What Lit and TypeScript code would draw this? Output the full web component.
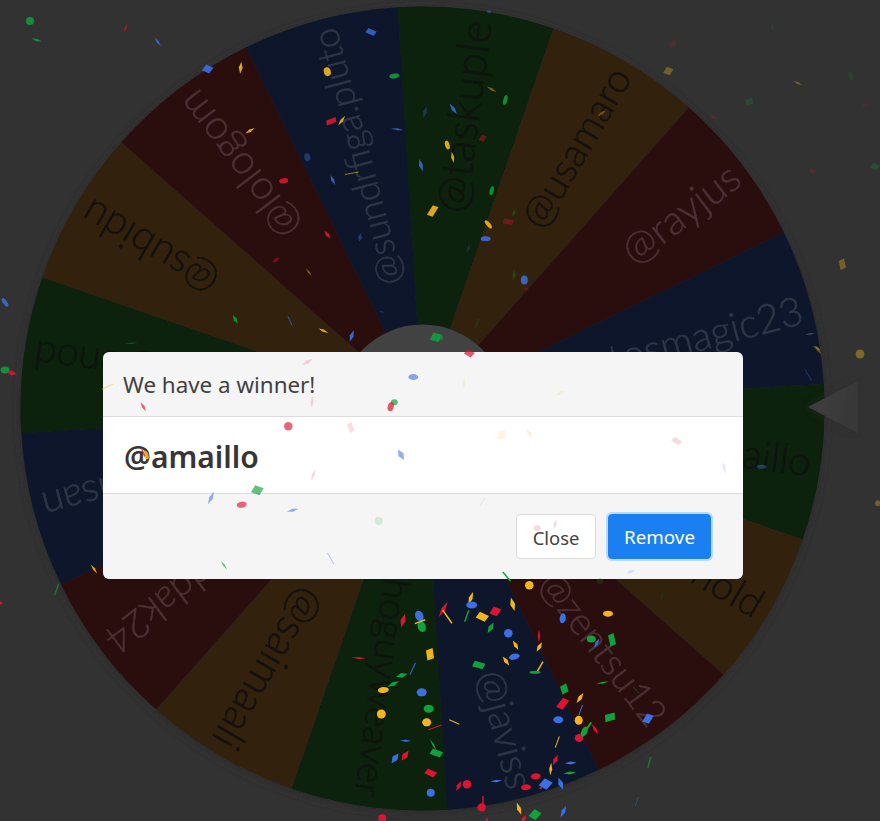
import { LitElement, html, css, svg } from "lit";
import { customElement } from "lit/decorators.js";

const CX = 422.5, CY = 408.5, R = 402, HUB = 84, STEP = 22.5, START = -3.5;
const SEG: Record<string, { fill: string; text: string }> = {
  g: { fill: "#08200e", text: "#0c170e" },
  y: { fill: "#30220f", text: "#15110a" },
  r: { fill: "#2c0b0f", text: "#4a3034" },
  b: { fill: "#0e182b", text: "#2e3646" },
};
const NAMES: [string, string, number][] = [
  ["@amaillo", "g", 40], ["@arnold", "y", 40], ["@zentsu12", "r", 38], ["@javiss", "b", 39],
  ["@hhoguyweaver", "g", 38], ["@saimaali", "y", 43], ["@addak24", "r", 39], ["@hasan", "b", 40],
  ["@lenod", "g", 40], ["@subidu", "y", 41], ["@lologom", "r", 41], ["@sundrfiga.pluto", "b", 36.5],
  ["@taskuple", "g", 44], ["@usamaro", "y", 40], ["@rayjus", "r", 41], ["@atosmagic23", "b", 40],
];
const RD = "#dc1430", GR = "#10a03c", BL = "#3b6fe2", YE = "#f2b51c";

// kind, x, y, w, h, rotation, colour, opacity
type C = [string, number, number, number, number, number, string, number?];
const CONFETTI: C[] = [
  // bottom cluster
  ["d",470.7,598.3,4,14,20,YE],["e",471.7,605,11,7,0,BL],["d",443.3,609.3,4,18,30,RD],["l",447.3,616.7,1.5,16,-35,YE],
  ["e",419.3,616,8,11,-25,BL],["e",421.7,626.7,8,11,-20,GR],["l",420,621.7,1.5,11,70,YE],["d",403,620.7,5,14,15,RD],
  ["r",482.3,616.7,10,7,25,YE],["r",495.3,611.3,8,8,20,RD],["d",512.7,604.3,5,14,-15,YE],["e",529.3,585.3,8.5,8.5,0,YE],
  ["l",506.7,576.7,1.5,12,-40,GR],["d",490.7,627.7,5,12,30,GR],["l",466.7,616,1.5,12,20,GR],["e",508.3,633.3,8.5,8.5,0,BL],
  ["d",515.7,645.3,4,11,-30,YE],["e",514.3,656.7,11,6,-15,BL],["d",506,661,4,11,-35,YE],["d",539,636,2.5,13,0,RD],
  ["d",539.3,647,4,11,30,YE],["l",540,666.7,1.5,12,30,YE],["e",535,672.3,11,3,0,GR],["r",478.7,665,11,6,15,GR],
  ["r",430,654.3,7,10,-20,YE],["d",359,658,14,2,5,RD],["d",401.7,675.3,12,5,-15,GR],["l",412.7,668.7,1,13,25,BL],
  ["d",393.3,684,13,4,-25,GR],["e",383.3,690,11,6,-5,YE],["e",421.7,692.3,10,8,0,BL],["e",428.7,708.7,10,8,0,GR],
  ["e",381.3,714,9,9,0,YE],["e",426.7,722.3,9,8,0,YE],["l",454.3,722,1,11,-65,YE],["l",435,727.3,1,14,70,RD],
  ["d",405.7,740.7,12,2,3,BL],["d",433.3,745,2,13,-30,GR],["r",436.3,753,11,6,20,GR],["d",395,758.3,6,12,35,BL],
  ["d",405,755.7,6,12,35,RD],["r",430.7,773,10,6,25,RD],["e",430.7,792.7,8,8,0,BL],["d",458.7,786,4,11,25,RD],
  ["e",467,784.3,8.5,8.5,0,RD],["d",496.3,781,12,2.5,-5,BL],["e",481.7,807.3,8.5,8,0,RD],["l",483,800,1.5,8,0,RD],
  ["e",382.3,818.3,8,8,0,RD],["d",519,808.7,4,13,-20,YE],["r",535,814.7,8,9,30,GR],["d",523.7,819,4,10,30,RD],
  ["d",563.3,811.7,4,13,25,BL],["d",486.7,820,3,5,20,RD],["e",535.7,776.3,10,6,-8,RD],["e",526,787.3,10,6,-5,RD],
  ["r",545.7,784,9,9,30,BL],["d",560.7,783.7,5,13,-20,BL],["d",541,788,5,2,-20,RD],["d",550.7,769,3,13,5,YE],
  ["d",555.3,760,4,12,25,RD],["d",570.7,763,12,3,-3,BL],["d",569.7,773,13,3,-5,GR],["l",557.3,742,1,12,20,YE],
  ["e",579,738,8.5,8,0,RD],["e",584.3,731.7,6,11,25,GR],["l",589,725.7,2,8,35,GR],["d",595,729.3,3,12,-30,RD],
  ["e",578.7,720.3,8,9,0,YE],["e",558.3,719.7,10,7,0,BL],["r",562.7,703.7,7,11,25,RD],["d",580,698,4,12,35,YE],
  ["l",580.7,710,1,11,20,BL],["r",564.3,689,7,8,-30,GR],["r",610,717.3,10,7,-15,GR],["r",648,718.7,7,9,20,BL],
  ["d",602.7,682.7,13,2,-10,GR],["l",636,690,1,9,-40,GR,.35],["e",562.7,618.3,6,10,10,BL],["e",608,613.7,10,6,0,YE],
  ["e",591.3,639,9,7,0,GR],["r",612,639.7,6,11,-25,GR],["d",596.7,643.3,3,11,30,BL],["e",600,581,6,6,0,GR,.2],
  ["l",649.3,762.3,1.5,11,15,GR,.6],["l",636.7,801.7,1,10,20,BL,.4],["l",662,596,1,7,15,GR,.2],
  // upper left
  ["e",30,21,8,8,0,GR,.85],["d",36.7,40,11,2.5,15,GR,.85],["d",125.3,28.3,2,10,25,RD,.7],["d",157.7,41.7,2.5,11,-35,BL,.8],
  ["r",207.7,69,8,7,25,BL,.9],["d",240.7,67.7,4,12,5,YE,.9],["d",250,130.7,11,3,-30,YE,.9],["e",283.7,180.7,9,5,-10,RD,.9],
  ["e",327.3,71.7,7,9,-15,YE,.9],["r",371,32,9,5,25,BL,.8],["e",394.3,76,10,5,-10,GR,.85],["r",331.3,121.3,10,5,-20,RD,.9],
  ["d",341.7,120.7,3,12,35,YE,.9],["d",397.3,129.3,13,2,8,BL,.8],["d",425,112,4,12,15,BL,.3],["d",421,165.3,4,13,-15,BL,.85],
  ["r",432.7,211,6,11,20,YE,.9],["e",307.3,157.3,6,8,-10,BL,.4],["d",332.7,180,3,11,-25,BL,.8],["l",351.7,173.3,1,14,80,YE,.6],
  ["d",327.3,234.7,3.5,10,-35,RD,.9],["d",360,237.3,4,9,10,BL,.4],["d",276,260,4,9,55,RD,.4],["d",308.7,272,2,10,-35,YE,.45],
  ["d",235.3,319.3,3.5,10,-30,GR,.85],["l",290,321,1,10,-25,BL,.6],["d",323.3,330.7,11,2.5,25,YE,.9],["d",351.7,336,4,12,20,BL,.9],
  ["r",436,337.3,9,8,15,GR,.9],["e",5,302.3,4,10,-35,BL,.85],["d",131.7,343.3,13,1.5,-5,GR,.4],["d",381.7,311.7,6,2,15,BL,.25],
  // upper right
  ["d",489,11.7,6,4,20,BL,.4],["d",491.7,89.3,11,2.5,30,YE,.45],["e",505.3,100,4,10,15,GR,.85],["d",453.3,109,3.5,13,-35,BL,.85],
  ["r",482.7,138.3,5,6,20,RD,.4],["e",447.3,145,4.5,9,-15,YE,.9],["d",452.7,157.3,3,12,-10,YE,.9],["e",491.7,190.7,4,9,15,GR,.85],
  ["e",488.3,224.3,4,10,-40,YE,.9],["e",485.7,238.7,10,5,0,BL,.85],["r",508.3,221.7,10,5,10,RD,.35],["d",514,212.7,3,9,15,GR,.3],
  ["e",524.3,280,7,9,0,BL,.85],["d",514,275,3,10,5,GR,.3],["d",468.3,248.3,2,9,20,BL,.3],["d",601.7,113.3,10,3,-35,YE,.35],
  ["r",668.3,71,7,7,20,YE,.35],["r",672.3,44.3,7,5,-30,RD,.18],["d",772.3,26.7,3,10,-15,GR,.12],["d",797.7,83,10,2,25,YE,.35],
  ["r",850.7,76,5,8,-25,GR,.12],["r",749.3,101.7,7,6,-20,GR,.2],["d",713.3,117.3,8,3,25,RD,.18],["d",865,105,9,3,-5,RD,.15],
  ["r",812.3,171,6,4,25,RD,.18],["r",875,166.7,8,6,25,GR,.22],["r",842.3,264.3,6,9,-25,YE,.35],["d",810,334,10,2,-5,"#cfcfcf",.25],
  ["d",816.7,348,9,3,30,YE,.35],["l",477.3,323.3,1,9,20,GR,.25],["d",526.7,289.3,6,3,20,RD,.25],["e",441.7,338,3,5,10,GR,.5],
  // over the dialog and near it
  ["r",469.3,353.3,8,6,30,RD,.7],["d",464,383.3,3,12,5,YE,.12],["d",560,393.3,10,4,-25,YE,.14],["r",501.7,435,7,8,-15,YE,.14],
  ["d",529.3,433.3,3.5,11,-35,YE,.2],["r",676.7,441,9,5,35,RD,.16],["d",724.3,467.7,2.5,13,-15,BL,.18],["e",860,354,9,9,0,YE,.4],
  ["d",818.3,350,3,11,-35,YE,.4],["l",808.3,375,1,13,-30,BL,.35],["e",761.7,466.7,10,4,0,BL,.4],["e",877.7,503.3,5,6,0,YE,.35],
  ["e",537.3,528.3,7,6,0,RD,.16],["d",555,524.3,3,10,15,RD,.18],["l",482.7,501.7,1,10,30,BL,.1],["d",630.7,571.7,10,3,-20,BL,.18],
  ["l",107.3,386.7,1,12,65,YE,.5],["d",143.3,406.7,3,11,-30,RD,.65],["d",307.3,362,4,12,60,RD,.16],["d",312,401.7,3,12,5,RD,.16],
  ["e",413.3,377,10,6,0,BL,.6],["e",394.3,402.3,7,6,0,GR,.7],["e",390.7,406.7,6,9,15,RD,.7],["e",288.3,426.3,8.5,8.5,0,RD,.65],
  ["r",350.7,427.7,5,9,-30,RD,.14],["d",401,454.7,6,12,-30,BL,.55],["d",313.3,475,3.5,12,20,RD,.16],["r",257.3,490.3,9,8,20,GR,.65],
  ["d",211,498,4,14,25,BL,.55],["e",241.7,504.7,10,6,-10,RD,.65],["d",292.7,510.3,12,3,-15,BL,.55],["e",378.7,521,8,8,0,GR,.15],
  ["d",224,565.3,2,11,-35,GR,.65],["l",330.7,558.7,1,13,-30,BL,.35],["e",146,455,5,9,-20,YE,.85],["l",143,452,1.5,9,-25,RD,.7],
  // left edge
  ["e",5,370,9,7,0,GR,.85],["d",11.7,373,10,5,15,RD,.85],["d",94,569,2.5,11,-35,YE,.85],["l",56.7,589.3,1.5,12,20,GR,.6],["e",0,603,5,3,0,RD],
];

function point(deg: number, r: number) {
  const a = (deg * Math.PI) / 180;
  return `${(CX + r * Math.cos(a)).toFixed(2)} ${(CY + r * Math.sin(a)).toFixed(2)}`;
}

function piece([k, x, y, w, h, rot, color, op]: C) {
  const tf = `translate(${x} ${y}) rotate(${rot})`;
  const o = op ?? 1;
  if (k === "e") return svg`<ellipse transform=${tf} rx=${w / 2} ry=${h / 2} fill=${color} opacity=${o}></ellipse>`;
  if (k === "r") return svg`<rect transform="${tf} skewX(-12)" x=${-w / 2} y=${-h / 2} width=${w} height=${h} fill=${color} opacity=${o}></rect>`;
  if (k === "l") return svg`<rect transform=${tf} x=${-w / 2} y=${-h / 2} width=${w} height=${h} fill=${color} opacity=${o}></rect>`;
  return svg`<polygon transform=${tf} points="0,${-h / 2} ${w / 2},0 0,${h / 2} ${-w / 2},0" fill=${color} opacity=${o}></polygon>`;
}

@customElement("app-root")
export class AppRoot extends LitElement {
  static styles = css`
    :host {
      display: block;
      position: relative;
      box-sizing: border-box;
      width: 880px;
      height: 821px;
      padding: 352px 0 0 103px;
      overflow: hidden;
      background: #323232;
      font-family: "Noto Sans", "Open Sans", sans-serif;
    }
    .canvas { position: absolute; inset: 0; width: 880px; height: 821px; }
    .confetti { pointer-events: none; z-index: 2; }
    .name { font-family: Lato, sans-serif; font-weight: 300; dominant-baseline: central; text-anchor: end; stroke-width: 0.5; paint-order: stroke; }
    .modal {
      position: relative;
      z-index: 1;
      width: 640px;
      border-radius: 6px;
      overflow: hidden;
      background: #f5f5f5;
      color: #363636;
    }
    .head { height: 65px; box-sizing: border-box; display: flex; align-items: center; padding: 1px 20px 0; border-bottom: 1px solid #dbdbdb; font-size: 22.4px; color: #424242; }
    .body { height: 77px; box-sizing: border-box; display: flex; align-items: center; padding: 2px 21px 0; background: #fff; border-bottom: 1px solid #dbdbdb; font-size: 30px; font-weight: 600; color: #363636; }
    .foot { height: 85px; box-sizing: border-box; display: flex; justify-content: flex-end; align-items: center; gap: 12px; padding: 0 32px 0 0; }
    button { height: 45px; box-sizing: border-box; border-radius: 4px; font: inherit; padding: 1px 0 0; }
    .close { width: 80px; border: 1px solid #dbdbdb; background: #fff; color: #424242; font-size: 18.4px; }
    .remove { width: 103px; border: 1px solid #1a7ff0; background: #1a7ff0; color: #fff; font-size: 18.8px; box-shadow: 0 0 0 2px #bcd9f8; }
  `;

  render() {
    return html`
      <svg class="canvas" viewBox="0 0 880 821" aria-hidden="true">
        <defs>
          <filter id="soft" x="-10%" y="-10%" width="120%" height="120%"><feGaussianBlur stdDeviation="5"></feGaussianBlur></filter>
          <filter id="tiny" x="-5%" y="-5%" width="110%" height="110%"><feGaussianBlur stdDeviation="0.5"></feGaussianBlur></filter>
          <linearGradient id="tip" x1="0" y1="0" x2="1" y2="0.3"><stop offset="0" stop-color="#3f3f3f"></stop><stop offset="1" stop-color="#383838"></stop></linearGradient>
        </defs>
        <circle cx=${CX} cy=${CY + 2} r=${R} fill="#2b2b2b" filter="url(#soft)"></circle>
        <g filter="url(#tiny)">
          ${NAMES.map(([, c], i) => {
            const a = START + i * STEP;
            return svg`<path d="M${CX} ${CY} L${point(a, R)} A${R} ${R} 0 0 1 ${point(a + STEP, R)} Z" fill=${SEG[c].fill}></path>`;
          })}
          ${NAMES.map(([name, c, size], i) => {
            const a = START + (i + 0.5) * STEP;
            return svg`<text class="name" font-size=${size} transform="translate(${CX} ${CY}) rotate(${a})" x="392" y="0" fill=${SEG[c].text} stroke=${SEG[c].text}>${name}</text>`;
          })}
          <circle cx=${CX} cy=${CY} r=${HUB} fill="#424242"></circle>
        </g>
        <polygon points="808,407 857,381 857,433" fill="#2a2a2a" opacity=".6" filter="url(#soft)"></polygon>
        <polygon points="808,407 858,381 858,433" fill="url(#tip)" filter="url(#tiny)"></polygon>
      </svg>
      <section class="modal">
        <header class="head">We have a winner!</header>
        <div class="body">@amaillo</div>
        <footer class="foot">
          <button class="close">Close</button>
          <button class="remove">Remove</button>
        </footer>
      </section>
      <svg class="canvas confetti" viewBox="0 0 880 821" aria-hidden="true">${CONFETTI.map(piece)}</svg>
    `;
  }
}
